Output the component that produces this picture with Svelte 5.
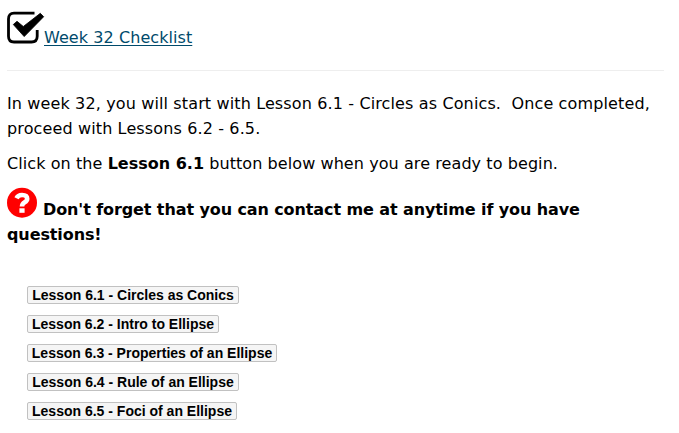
<script>
  const lessons = [
    ['Lesson 6.1 - Circles as Conics', 212],
    ['Lesson 6.2 - Intro to Ellipse', 192],
    ['Lesson 6.3 - Properties of an Ellipse', 250],
    ['Lesson 6.4 - Rule of an Ellipse', 212],
    ['Lesson 6.5 - Foci of an Ellipse', 210]
  ];
</script>

<main>
  <div class="head">
    <svg width="37" height="33" viewBox="0 0 37 33">
      <path d="M27.5 1.2H7Q1.5 1.2 1.5 7V24.3Q1.5 30 7 30H24.5Q30.2 30 30.2 24.3V18" fill="none" stroke="#000" stroke-width="2.8" />
      <path d="M6.3 12.5L10 9.3L16.3 14.5L33.3 1.3L36.7 4.7L17.2 24.6Z" fill="#000" stroke="#000" stroke-width=".8" stroke-linejoin="round" />
    </svg>
    <a href="#checklist">Week 32 Checklist</a>
  </div>
  <hr />
  <p class="intro">In week 32, you will start with Lesson 6.1 - Circles as Conics.&nbsp; Once completed,<br />proceed with Lessons 6.2 - 6.5.</p>
  <p class="second">Click on the <b>Lesson 6.1</b> button below when you are ready to begin.</p>
  <div class="note">
    <svg width="30" height="30" viewBox="0 0 30 30">
      <circle cx="15" cy="14.7" r="15" fill="#f00" />
      <path d="M9.5 10.2Q11 7 15 7Q20.2 7 20.2 10.7Q20.2 12.8 17.7 14.2Q15 15.8 15 18.6" fill="none" stroke="#fff" stroke-width="4.6" />
      <rect x="12.4" y="20.3" width="5.2" height="4.5" fill="#fff" />
    </svg>
    <b>Don't forget that you can contact me at anytime if you have</b>
  </div>
  <b class="last">questions!</b>
  <div class="buttons">
    {#each lessons as [label, width]}
      <button style="width: {width}px">{label}</button>
    {/each}
  </div>
</main>

<style>
  :global(body) { background: #fff; }
  main { box-sizing: border-box; width: 679px; height: 433px; padding: 12px 15px 0 7px; font: 16px/25px Verdana, "DejaVu Sans", sans-serif; color: #000; white-space: nowrap; overflow: hidden; }
  svg { flex: none; overflow: visible; }
  b { letter-spacing: -0.1px; }
  .head { display: flex; height: 58px; }
  .head a { margin-top: 13px; color: #004a6b; letter-spacing: 0.07px; text-decoration-thickness: 1px; text-underline-offset: 2px; }
  hr { margin: 0; border: 0; border-top: 1px solid #eee; }
  p { margin: 20px 0 0; letter-spacing: 0.08px; }
  .intro { letter-spacing: 0.13px; }
  .second { margin-top: 10px; }
  .second b { letter-spacing: 0; }
  .note { display: flex; height: 30px; margin-top: 12px; gap: 6px; }
  .note b { margin-top: 9px; }
  .last { display: block; margin-top: 4px; }
  .buttons { display: flex; flex-direction: column; gap: 11px; margin: 39px 0 0 20px; }
  button { box-sizing: border-box; height: 18px; padding: 0; border: 1px solid #c1c1c1; border-radius: 2px; background: #f5f5f5; color: #000; font: bold 14px/16px "Liberation Sans", Arial, sans-serif; }
</style>
